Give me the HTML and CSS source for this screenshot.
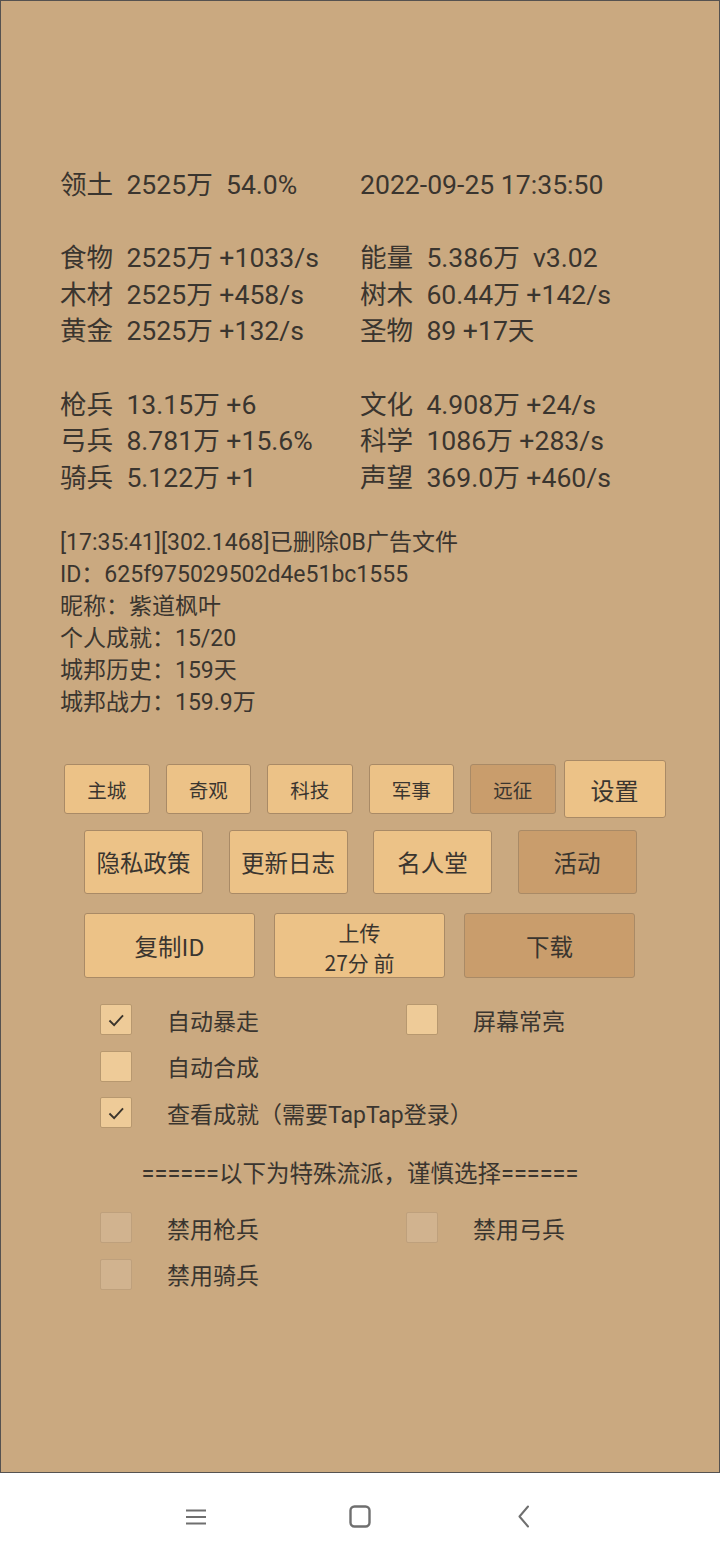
FILE: index.html
```html
<!DOCTYPE html>
<html lang="zh-CN">
<head>
<meta charset="utf-8">
<link rel="stylesheet" href="styles.css">
</head>
<body>
<div class="panel">
  <div class="stats">
    <div class="row"><span class="c">领土  2525万  54.0%</span><span class="c">2022-09-25 17:35:50</span></div>
    <div class="row gap"><span class="c">食物  2525万 +1033/s</span><span class="c">能量  5.386万  v3.02</span></div>
    <div class="row"><span class="c">木材  2525万 +458/s</span><span class="c">树木  60.44万 +142/s</span></div>
    <div class="row"><span class="c">黄金  2525万 +132/s</span><span class="c">圣物  89 +17天</span></div>
    <div class="row gap"><span class="c">枪兵  13.15万 +6</span><span class="c">文化  4.908万 +24/s</span></div>
    <div class="row"><span class="c">弓兵  8.781万 +15.6%</span><span class="c">科学  1086万 +283/s</span></div>
    <div class="row"><span class="c">骑兵  5.122万 +1</span><span class="c">声望  369.0万 +460/s</span></div>
  </div>
  <div class="info">
    <div>[17:35:41][302.1468]已删除0B广告文件</div>
    <div>ID：625f975029502d4e51bc1555</div>
    <div>昵称：紫道枫叶</div>
    <div>个人成就：15/20</div>
    <div>城邦历史：159天</div>
    <div>城邦战力：159.9万</div>
  </div>
  <div class="btnrow r1">
    <div class="btn sm">主城</div>
    <div class="btn sm">奇观</div>
    <div class="btn sm">科技</div>
    <div class="btn sm">军事</div>
    <div class="btn sm dark">远征</div>
    <div class="btn set">设置</div>
  </div>
  <div class="btnrow r2">
    <div class="btn md">隐私政策</div>
    <div class="btn md">更新日志</div>
    <div class="btn md">名人堂</div>
    <div class="btn md dark">活动</div>
  </div>
  <div class="btnrow r3">
    <div class="btn lg">复制ID</div>
    <div class="btn lg two"><span>上传</span><span>27分 前</span></div>
    <div class="btn lg dark">下载</div>
  </div>
  <div class="checks">
    <div class="chk"><span class="box on"><svg viewBox="0 0 32 32" width="32" height="32"><path d="M9 16.5 L14 21.5 L23.5 11" fill="none" stroke="#3a342c" stroke-width="2"/></svg></span><span class="lbl">自动暴走</span></div>
    <div class="chk"><span class="box"></span><span class="lbl">屏幕常亮</span></div>
    <div class="chk"><span class="box"></span><span class="lbl">自动合成</span></div>
    <div class="chk"></div>
    <div class="chk wide"><span class="box on"><svg viewBox="0 0 32 32" width="32" height="32"><path d="M9 16.5 L14 21.5 L23.5 11" fill="none" stroke="#3a342c" stroke-width="2"/></svg></span><span class="lbl">查看成就（需要TapTap登录）</span></div>
  </div>
  <div class="sep">======以下为特殊流派，谨慎选择======</div>
  <div class="checks dis">
    <div class="chk"><span class="box off"></span><span class="lbl">禁用枪兵</span></div>
    <div class="chk"><span class="box off"></span><span class="lbl">禁用弓兵</span></div>
    <div class="chk"><span class="box off"></span><span class="lbl">禁用骑兵</span></div>
  </div>
</div>
<div class="nav">
  <svg class="ico" width="24" height="24" viewBox="0 0 24 24"><path d="M2 5.5h20M2 12h20M2 18.5h20" stroke="#6f6f6f" stroke-width="2" fill="none"/></svg>
  <svg class="ico" width="24" height="24" viewBox="0 0 24 24"><rect x="2.5" y="1.5" width="19" height="20" rx="4" stroke="#6f6f6f" stroke-width="2.4" fill="none"/></svg>
  <svg class="ico" width="24" height="24" viewBox="0 0 24 24"><path d="M16 1.5 L7.5 11.5 L16 21.5" stroke="#6f6f6f" stroke-width="2" fill="none" stroke-linecap="round" stroke-linejoin="round"/></svg>
</div>
</body>
</html>
```
FILE: styles.css
```css
html, body {
  margin: 0;
  padding: 0;
}
body {
  width: 720px;
  height: 1560px;
  background: #ffffff;
  font-family: Roboto, "Noto Sans CJK SC", sans-serif;
  color: #3a352f;
  overflow: hidden;
}
.panel {
  box-sizing: border-box;
  width: 720px;
  height: 1473px;
  border: 1px solid #555250;
  background: #caa980;
  padding-top: 166px;
}
.stats {
  padding-left: 59px;
  font-size: 26.6px;
}
.row {
  display: grid;
  grid-template-columns: 300px 1fr;
  line-height: 36.6px;
  height: 36.6px;
  white-space: pre;
}
.row.gap {
  margin-top: 36.6px;
}
.info {
  margin-top: 31px;
  padding-left: 59px;
  font-size: 23px;
  line-height: 32px;
}
.btnrow {
  display: flex;
  align-items: center;
}
.btn {
  box-sizing: border-box;
  display: flex;
  align-items: center;
  justify-content: center;
  background: #ecc287;
  border: 1px solid #a98a66;
  border-radius: 3px;
  font-family: "Noto Sans CJK SC", sans-serif;
  color: #3a352f;
}
.btn.dark {
  background: #c99d6c;
}
.r1 {
  margin-top: 41px;
  padding-left: 63px;
  height: 58px;
}
.btn.sm {
  width: 85.5px;
  height: 50px;
  margin-right: 16px;
  font-size: 19.5px;
}
.btn.sm.dark {
  margin-right: 8px;
}
.btn.set {
  width: 102px;
  height: 58px;
  font-size: 24px;
}
.r2 {
  margin-top: 12px;
  padding-left: 83px;
  gap: 25.5px;
}
.btn.md {
  width: 119px;
  height: 64px;
  font-size: 23.5px;
}
.r3 {
  margin-top: 19px;
  padding-left: 83px;
  gap: 19px;
}
.btn.lg {
  width: 171px;
  height: 65px;
  font-size: 23.5px;
}
.btn.two {
  flex-direction: column;
  font-size: 21px;
  line-height: 30px;
  padding-top: 2px;
}
.checks {
  display: grid;
  grid-template-columns: 306px 1fr;
  padding-left: 99px;
  row-gap: 15.5px;
  margin-top: 26px;
  font-size: 23px;
}
.chk {
  display: flex;
  align-items: center;
  height: 31px;
}
.chk.wide {
  grid-column: 1 / 3;
}
.box {
  box-sizing: border-box;
  width: 32px;
  height: 31px;
  flex: none;
  background: #eecb98;
  border: 1px solid #b7986f;
  border-radius: 2px;
  display: flex;
  align-items: center;
  justify-content: center;
}
.box svg {
  display: block;
}
.box.off {
  background: #d1b38f;
  border-color: #bea07c;
}
.lbl {
  margin-left: 35px;
}
.dis {
  margin-top: 22px;
}
.sep {
  margin-top: 30px;
  text-align: center;
  font-size: 23.5px;
  line-height: 32px;
}
.nav {
  height: 87px;
  display: flex;
  align-items: center;
  justify-content: center;
  gap: 140px;
  padding-top: 0;
}
.ico {
  display: block;
}
```
